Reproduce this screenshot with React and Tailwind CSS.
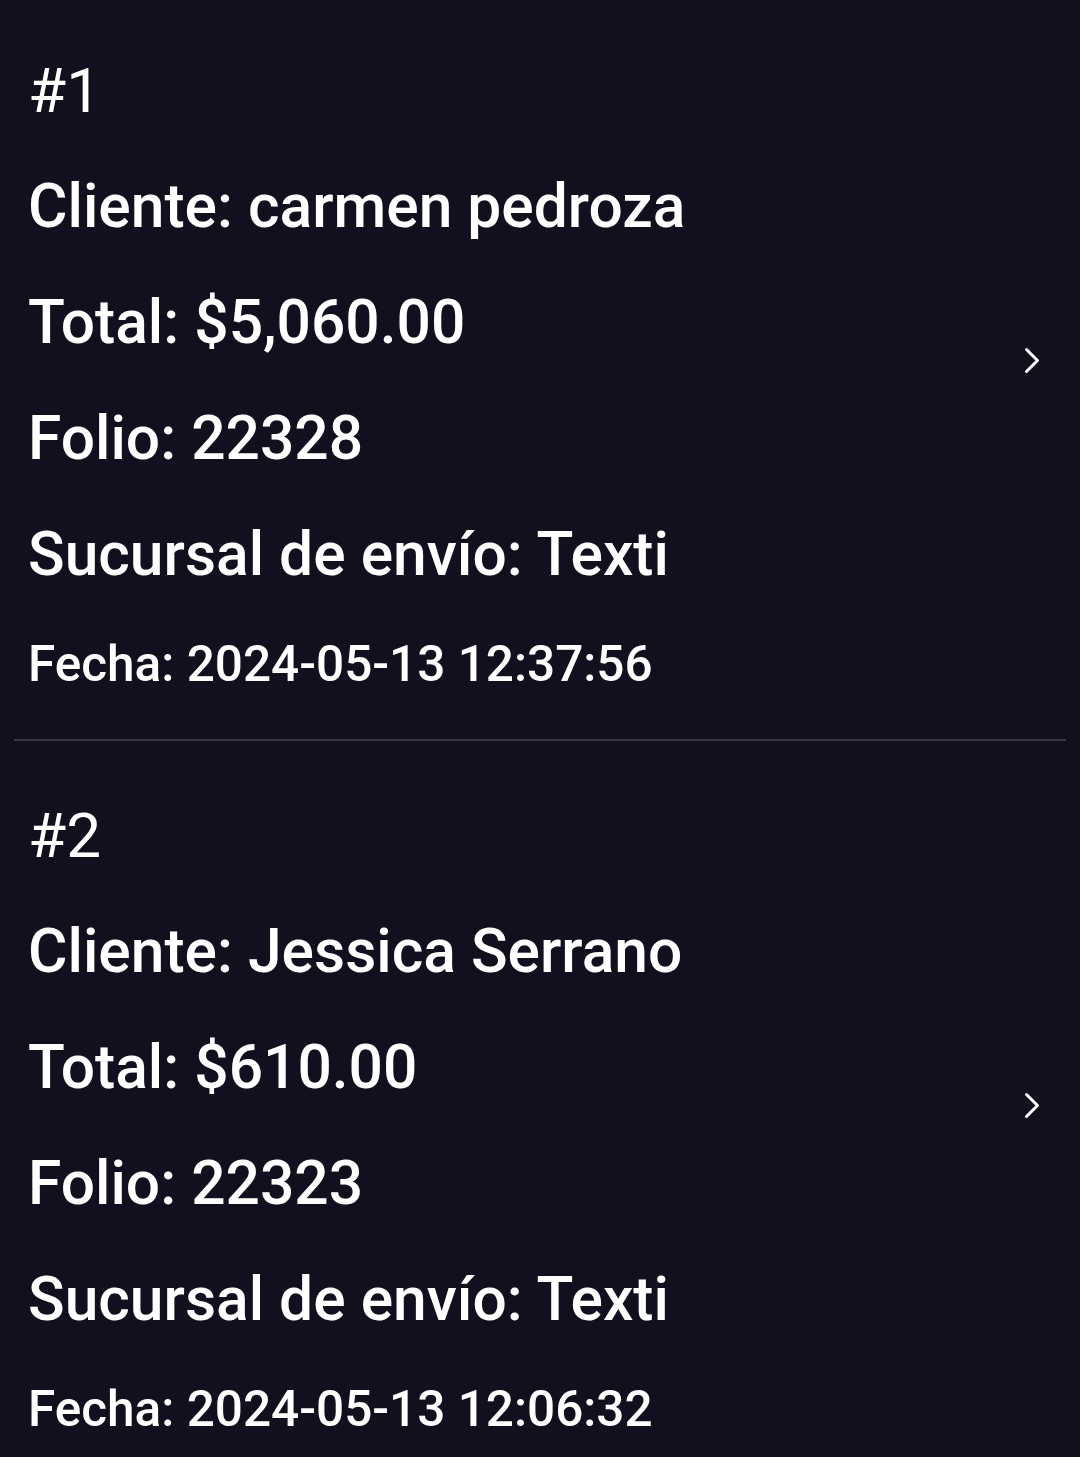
import React from 'react';

const pedidos = [
  {
    n: 1,
    cliente: 'carmen pedroza',
    total: '$5,060.00',
    folio: '22328',
    sucursal: 'Texti',
    fecha: '2024-05-13 12:37:56',
  },
  {
    n: 2,
    cliente: 'Jessica Serrano',
    total: '$610.00',
    folio: '22323',
    sucursal: 'Texti',
    fecha: '2024-05-13 12:06:32',
  },
];

const Chevron = () => (
  <svg width="16" height="27" viewBox="0 0 16 27" fill="none" className="mb-[18px]">
    <polyline
      points="2.5,2.5 13.5,13.5 2.5,24.5"
      stroke="white"
      strokeWidth="3"
      strokeLinecap="round"
      strokeLinejoin="round"
    />
  </svg>
);

const App = () => {
  return (
    <div className="min-h-[1457px] bg-[#11101f] text-white font-['Roboto',sans-serif] overflow-hidden">
      {pedidos.map((p, idx) => (
        <div key={p.n}>
          {idx > 0 && <div className="mx-[14px] h-[2px] bg-[#393846] mb-[4px]" />}
          <div className="flex items-center pr-[40px]">
            <div className="flex-1 pl-[28px] pt-[33px] pb-[24px]">
              <p className="text-[62px] leading-[116px] font-normal">#{p.n}</p>
              <p className="text-[60.5px] leading-[116px] font-medium">Cliente: {p.cliente}</p>
              <p className="text-[60.5px] leading-[116px] font-medium">Total: {p.total}</p>
              <p className="text-[60.5px] leading-[116px] font-medium">Folio: {p.folio}</p>
              <p className="text-[60.5px] leading-[116px] font-medium">Sucursal de envío: {p.sucursal}</p>
              <p className="text-[49.5px] leading-[102px] font-medium">Fecha: {p.fecha}</p>
            </div>
            <Chevron />
          </div>
        </div>
      ))}
    </div>
  );
};

export default App;
